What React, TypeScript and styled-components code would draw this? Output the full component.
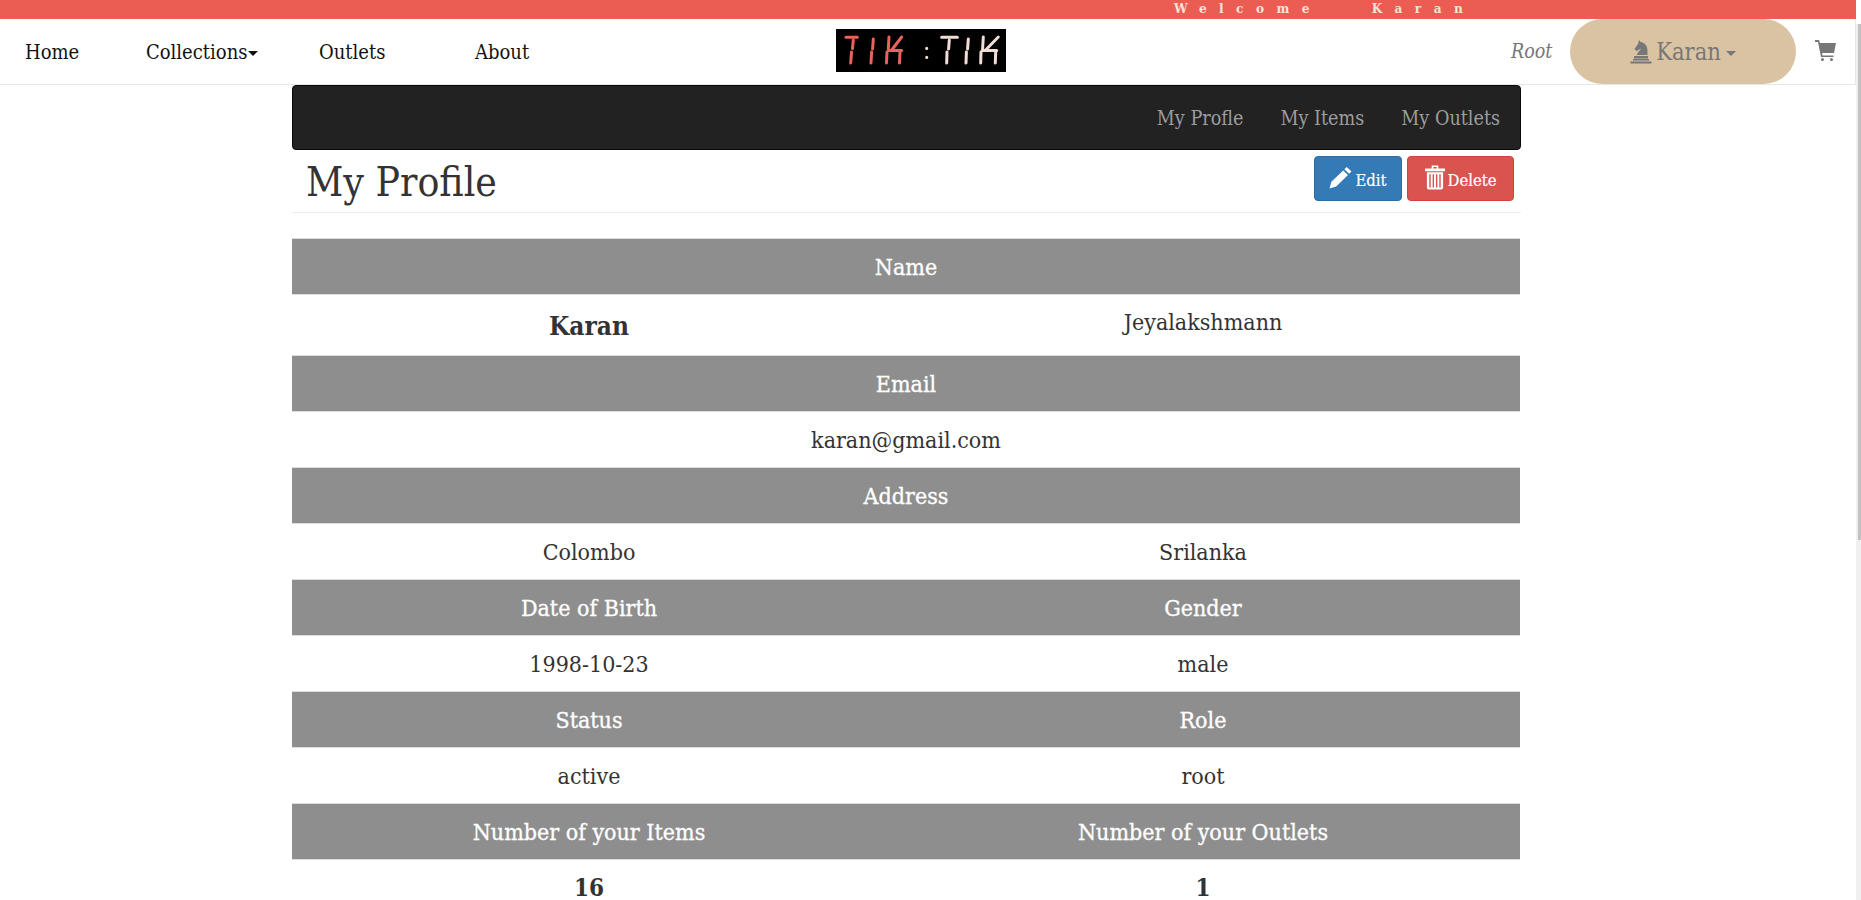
import React from "react";
import styled, { createGlobalStyle } from "styled-components";

const SERIF = `"DejaVu Serif Condensed", "Liberation Serif", serif`;

const Global = createGlobalStyle`
  html { background: #fff; }
  body { margin: 0; background: #fff; font-family: ${SERIF}; color: #333; overflow-x: hidden; }
`;

const Page = styled.div`
  width: 1856px;
`;

const ScrollTrack = styled.div`
  position: fixed;
  top: 24px;
  right: 0;
  bottom: 0;
  width: 5px;
  background: #f0f0f0;
  display: flex;
  justify-content: flex-end;
`;

const ScrollThumb = styled.div`
  width: 3px;
  height: 516px;
  background: #c1c1c1;
`;

const WelcomeBar = styled.div`
  height: 19px;
  background: #eb5c52;
  color: #f6e2d6;
  font-family: ${SERIF};
  font-size: 13.5px;
  font-weight: 700;
  line-height: 17px;
  letter-spacing: 12.4px;
  padding-left: 1174px;
  white-space: pre;
  overflow: hidden;
`;

const Navbar = styled.nav`
  height: 65px;
  display: flex;
  align-items: center;
  border-bottom: 1px solid #e7e7e7;
  border-right: 1px solid #e7e7e7;
  background: #fff;
`;

const NavLinks = styled.div`
  display: flex;
  width: 836px;
  padding-left: 25px;
  box-sizing: border-box;
`;

const NavLink = styled.a<{ $w: number }>`
  width: ${(p) => p.$w}px;
  font-size: 20px;
  color: #111;
  display: flex;
  align-items: center;
`;

const Caret = styled.span<{ $color?: string; $gap?: number }>`
  display: inline-block;
  width: 0;
  height: 0;
  margin-left: ${(p) => p.$gap ?? 1}px;
  margin-top: 4px;
  border-top: 5px solid ${(p) => p.$color ?? "#111"};
  border-left: 5px solid transparent;
  border-right: 5px solid transparent;
`;

const LogoWrap = styled.div`
  width: 675px;
  display: flex;
  margin-top: -2px;
`;

const RoleLabel = styled.i`
  width: 59px;
  font-size: 19.5px;
  color: #777;
`;

const UserPill = styled.div`
  width: 226px;
  height: 65px;
  border-radius: 33px;
  background: #d9c3a3;
  color: #777;
  font-size: 23.5px;
  display: flex;
  align-items: center;
  justify-content: center;
  gap: 4px;
`;

const CartBox = styled.div`
  margin-left: 19px;
  display: flex;
  margin-top: -2px;
`;

const Container = styled.main`
  width: 1229px;
  margin-left: 292px;
  padding-bottom: 40px;
`;

const SubNav = styled.div`
  height: 62px;
  background: #222;
  border: 1px solid #080808;
  border-radius: 4px;
  display: flex;
  align-items: center;
  justify-content: flex-end;
  gap: 37px;
  padding: 1px 20px 0 0;
`;

const SubLink = styled.a`
  color: #9d9d9d;
  font-size: 19.6px;
`;

const TitleRow = styled.header`
  box-sizing: border-box;
  height: 63px;
  border-bottom: 1px solid #eee;
  display: flex;
  justify-content: space-between;
  padding: 0 7px 0 14px;
  margin-bottom: 25px;
`;

const Title = styled.h1`
  margin: 0;
  padding-top: 2px;
  font-size: 40.5px;
  font-weight: 400;
  line-height: 61px;
  color: #333;
`;

const Actions = styled.div`
  display: flex;
  gap: 5px;
  padding-top: 6px;
`;

const Btn = styled.button<{ $bg: string; $border: string; $w: number }>`
  width: ${(p) => p.$w}px;
  height: 45px;
  background: ${(p) => p.$bg};
  border: 1px solid ${(p) => p.$border};
  border-radius: 4px;
  color: #fff;
  font-family: ${SERIF};
  font-size: 16.5px;
  -webkit-text-stroke: 0.2px #fff;
  display: flex;
  align-items: center;
  justify-content: center;
  gap: 3px;
  padding: 3px 0 0;
  svg {
    margin-bottom: 6px;
  }
`;

const Table = styled.section`
  display: grid;
  grid-template-columns: 594px 634px;
  width: 1228px;
  border-top: 1px solid #ddd;
`;

const Head = styled.div<{ $full?: boolean }>`
  grid-column: ${(p) => (p.$full ? "1 / -1" : "auto")};
  height: 56px;
  box-sizing: border-box;
  background: #8e8e8e;
  border-bottom: 1px solid #ddd;
  color: #fff;
  font-size: 23px;
  -webkit-text-stroke: 0.3px #fff;
  display: flex;
  align-items: center;
  justify-content: center;
`;

const Cell = styled.div<{ $full?: boolean; $tall?: boolean; $bold?: boolean; $up?: boolean }>`
  grid-column: ${(p) => (p.$full ? "1 / -1" : "auto")};
  height: ${(p) => (p.$tall ? 61 : 56)}px;
  box-sizing: border-box;
  border-bottom: 1px solid #ddd;
  font-size: ${(p) => (p.$tall && p.$bold ? 26 : p.$bold ? 24 : 23)}px;
  font-weight: ${(p) => (p.$bold ? 700 : 400)};
  color: #333;
  display: flex;
  align-items: center;
  justify-content: center;
  padding-top: ${(p) => (p.$tall && p.$bold ? 2 : 0)}px;
  padding-bottom: ${(p) => (p.$up ? 6 : 0)}px;
`;

const Seg = styled.line<{ $c: string }>`
  stroke: ${(p) => p.$c};
  stroke-width: 3;
  stroke-linecap: round;
`;

const RED = "#e8635c";
const PALE = "#f4dcd6";
type S = [number, number, number, number];
const redSegs: S[] = [
  [10, 8.3, 21.3, 8.3], [17.3, 11, 16.5, 19.5], [15.5, 23, 14.7, 34],
  [37.3, 10, 36.6, 20], [35.6, 23, 35, 34],
  [53, 8, 52.3, 20], [51, 23, 50.5, 34], [55.7, 21, 65.7, 8], [52.5, 21.5, 65.7, 21.5], [64, 23, 63.5, 34],
];
const paleSegs: S[] = [
  [90.7, 19.3, 90.7, 19.4], [90.7, 28.3, 90.7, 28.4],
  [105.7, 8.3, 121.3, 8.3], [113.3, 11, 112.6, 20], [111, 23, 110.7, 34],
  [132.3, 10, 131.6, 20], [130.4, 23, 130, 34],
  [147.3, 8, 146.6, 20], [145, 23, 144.7, 34], [149.7, 21, 162.3, 8], [146.3, 21.5, 160.7, 21.5], [159.7, 23, 159.3, 34],
];

const Logo = () => (
  <svg width="170" height="43" viewBox="0 0 170 43" role="img" aria-label="TIK:TIK">
    <rect width="170" height="43" fill="#000" />
    {redSegs.map((s, i) => <Seg key={i} $c={RED} x1={s[0]} y1={s[1]} x2={s[2]} y2={s[3]} />)}
    {paleSegs.map((s, i) => <Seg key={i} $c={PALE} x1={s[0]} y1={s[1]} x2={s[2]} y2={s[3]} />)}
  </svg>
);

const Pencil = () => (
  <svg width="23" height="23" viewBox="0 0 24 23" fill="#fff">
    <path d="M18.5 0.5 L23.5 5.2 L21 7.7 L16 3 Z M14.8 4.2 L19.8 8.9 L7.5 21 L0.5 23 L2.5 16 Z" />
  </svg>
);

const Trash = () => (
  <svg width="20" height="25" viewBox="0 0 21 25" fill="#fff">
    <path fillRule="evenodd" d="M7 0 H14 V3 H21 V6 H0 V3 H7 Z M8.8 1.5 V3 H12.2 V1.5 Z" />
    <path fillRule="evenodd" d="M2 7 H19 V23 Q19 25 17 25 H4 Q2 25 2 23 Z M4.5 9 V23 H6 V9 Z M8 9 V23 H9.5 V9 Z M11.5 9 V23 H13 V9 Z M15 9 V23 H16.5 V9 Z" />
  </svg>
);

const Knight = () => (
  <svg width="22" height="24" viewBox="0 0 22 24" fill="#777">
    <path d="M9 0 L10.5 2 C15 2.5 17.5 6 17.5 11 L17.5 15 H7 C7 12.5 10 11 11 8.5 L8.5 10 L6.5 11 L4.5 9 L8 4 Z" />
    <rect x="4" y="16" width="14" height="2.5" />
    <rect x="3" y="19" width="16" height="1.5" />
    <rect x="0.5" y="21.5" width="21" height="2" />
  </svg>
);

const Cart = () => (
  <svg width="21" height="21" viewBox="0 0 21 21" fill="#777">
    <path d="M0 0 H4 L5 3 H21 L19 13 H7 L7.5 15.5 H18.5 V17 H6 L3 2 H0 Z" />
    <rect x="6" y="18" width="3" height="3" rx="1.5" />
    <rect x="15" y="18" width="3" height="3" rx="1.5" />
  </svg>
);

export default function App() {
  return (
    <>
      <Global />
      <Page>
        <WelcomeBar>{"Welcome   Karan"}</WelcomeBar>
        <Navbar>
          <NavLinks>
            <NavLink $w={121}>Home</NavLink>
            <NavLink $w={173}>Collections<Caret /></NavLink>
            <NavLink $w={156}>Outlets</NavLink>
            <NavLink $w={100}>About</NavLink>
          </NavLinks>
          <LogoWrap><Logo /></LogoWrap>
          <RoleLabel>Root</RoleLabel>
          <UserPill><Knight />Karan<Caret $color="#777" /></UserPill>
          <CartBox><Cart /></CartBox>
        </Navbar>
        <Container>
          <SubNav>
            <SubLink>My Profle</SubLink>
            <SubLink>My Items</SubLink>
            <SubLink>My Outlets</SubLink>
          </SubNav>
          <TitleRow>
            <Title>My Profile</Title>
            <Actions>
              <Btn $bg="#337ab7" $border="#2e6da4" $w={88}><Pencil />Edit</Btn>
              <Btn $bg="#d9534f" $border="#d43f3a" $w={107}><Trash />Delete</Btn>
            </Actions>
          </TitleRow>
          <Table>
            <Head $full>Name</Head>
            <Cell $tall $bold>Karan</Cell>
            <Cell $tall $up>Jeyalakshmann</Cell>
            <Head $full>Email</Head>
            <Cell $full>karan@gmail.com</Cell>
            <Head $full>Address</Head>
            <Cell>Colombo</Cell>
            <Cell>Srilanka</Cell>
            <Head>Date of Birth</Head>
            <Head>Gender</Head>
            <Cell>1998-10-23</Cell>
            <Cell>male</Cell>
            <Head>Status</Head>
            <Head>Role</Head>
            <Cell>active</Cell>
            <Cell>root</Cell>
            <Head>Number of your Items</Head>
            <Head>Number of your Outlets</Head>
            <Cell $bold>16</Cell>
            <Cell $bold>1</Cell>
          </Table>
        </Container>
      </Page>
      <ScrollTrack><ScrollThumb /></ScrollTrack>
    </>
  );
}
